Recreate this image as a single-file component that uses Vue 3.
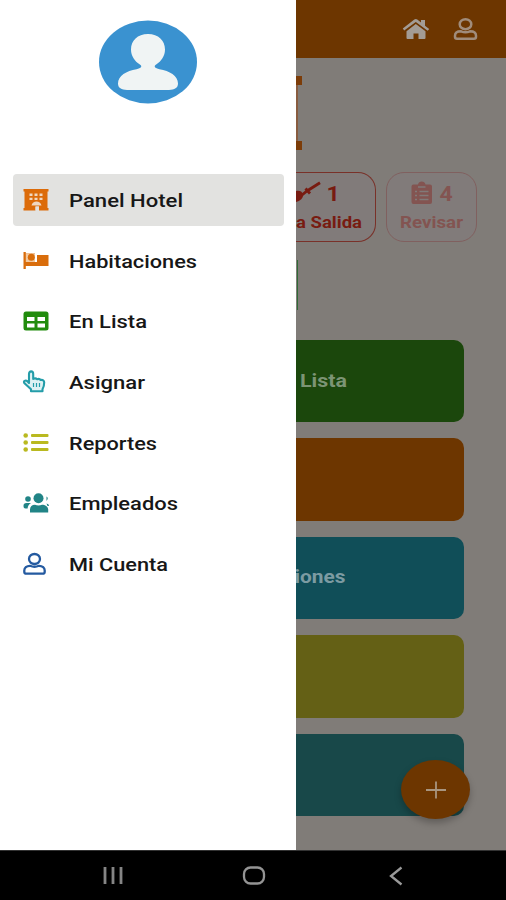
<script setup>
const menu = [
  { id: 'hotel', label: 'Panel Hotel', color: '#dc6b09', width: 114 },
  { id: 'bed', label: 'Habitaciones', color: '#d96d0c', width: 128 },
  { id: 'table', label: 'En Lista', color: '#218c0d', width: 78 },
  { id: 'hand', label: 'Asignar', color: '#249da9', width: 76 },
  { id: 'list', label: 'Reportes', color: '#b9b920', width: 88 },
  { id: 'users', label: 'Empleados', color: '#218486', width: 109 },
  { id: 'user', label: 'Mi Cuenta', color: '#245aa0', width: 99 },
]
const tiles = [
  { color: '#1b470c', label: 'Lista', tint: '#7c9474' },
  { color: '#6d3600' },
  { color: '#104e58', label: 'iones', tint: '#7c9ba2' },
  { color: '#646015' },
  { color: '#184849' },
]
</script>

<template>
  <div class="phone">
    <div class="screen">
      <aside class="drawer">
        <svg class="avatar" viewBox="0 0 98 84">
          <ellipse cx="49" cy="42" rx="49" ry="41.500" fill="#3a92d0" />
          <path d="M49 14c-10.500 0-17 6.500-17 15.500 0 6.500 4 12 8.500 14.800 3.500 2.200 1.500 4-3 4.900C27.500 51 19 55.500 19 63.500c0 4.500 3.500 6.300 9 6.500h42c5.500-.2 9-2 9-6.500 0-8-8.500-12.500-18.500-14.300-4.500-.9-6.500-2.700-3-4.900C62 41.500 66 36 66 29.500 66 20.500 59.500 14 49 14z" fill="#f0f4f4" />
        </svg>
        <nav class="menu">
          <a v-for="(m, i) in menu" :key="m.id" class="item" :class="{ active: i === 0 }">
            <svg class="icon" viewBox="0 0 26 24" :style="{ color: m.color }">
              <g v-if="m.id === 'hotel'">
                <path d="M.5 1h25v2.500h-1V20h1v2.500H16v-4h-3.500v4H.5V20h1V3.500h-1z" fill="currentColor" />
                <path d="M6.500 5.500h3V8h-3zM11.500 5.500h3V8h-3zM16.500 5.500h3V8h-3zM6.500 9.800h3v2.200h-3zM11.500 9.800h3v2.200h-3zM16.500 9.800h3v2.200h-3zM8.500 17.500c1-5.500 9-5.500 10 0z" fill="#f0d7c0" />
                <path d="M12.500 18.500h3.500v4h-3.500z" fill="#e2e2e0" />
              </g>
              <g v-else-if="m.id === 'bed'" fill="currentColor">
                <path d="M.5 3h2.300v1.500H12V13h2V6h11.500v11H2.800v3H.5z" />
                <path d="M2.800 4.500H12V13H2.800z" fill="#f2c9a0" />
                <circle cx="8.300" cy="8.200" r="3.500" />
              </g>
              <g v-else-if="m.id === 'table'">
                <rect x=".5" y="2.500" width="25" height="19" rx="2.500" fill="currentColor" />
                <path d="M4 8h7.500v4H4zM14.500 8H22v4h-7.500zM4 14.500h7.500v4H4zM14.500 14.500H22v4h-7.500z" fill="#fff" />
              </g>
              <g v-else-if="m.id === 'hand'" fill="none" stroke="currentColor" stroke-width="2.100" stroke-linejoin="round">
                <path d="M6 13V4c0-3.500 4.200-3.500 4.200 0v5c1.500-1 3-.7 4 .3 1.300-.7 2.700-.3 3.500.7 2-.5 3.500.5 3.500 2.300 0 3.500-.5 5-1.700 7v2H8v-2l-6.500-6c-1.500-2 1-3.700 2.700-2.200z" fill="#dff2f3" />
                <path d="M10.500 13v4M13.500 13v4M16.500 13v4" stroke-width="1.200" />
              </g>
              <g v-else-if="m.id === 'list'" fill="currentColor">
                <circle cx="2.700" cy="4.500" r="2.300" /><circle cx="2.700" cy="11.500" r="2.300" /><circle cx="2.700" cy="18.500" r="2.300" />
                <rect x="8" y="3.100" width="17.500" height="2.800" rx="1" /><rect x="8" y="10.100" width="17.500" height="2.800" rx="1" /><rect x="8" y="17.100" width="17.500" height="2.800" rx="1" />
              </g>
              <g v-else-if="m.id === 'users'" fill="currentColor">
                <circle cx="15.500" cy="7.200" r="5" />
                <path d="M7 21.500v-3c0-3 2-4.800 5-4.800 2 1 5 1 7 0 3 0 6.200 1.800 6.200 4.800v3z" />
                <circle cx="5" cy="8" r="2.800" />
                <path d="M.5 14.800c0-1.800 1-2.800 3-2.800h4.500c-2 1.200-3.200 3-3.400 5.500H2.500c-1.500 0-2-.8-2-2.700z" />
                <path d="M23.500 5.500q2.500 1.500 0 4.500zM23.500 12.500q2.500.2 2.500 2.500h-1.500z" />
              </g>
              <g v-else fill="none" stroke="currentColor" stroke-width="2.300">
                <ellipse cx="11.500" cy="7" rx="5.500" ry="5" />
                <path d="M7 13.800c-3.500 0-5.700 2-5.700 4.700v1.200q0 2 2 2h16.400q2 0 2-2v-1.200c0-2.700-2.200-4.700-5.700-4.700-3 1.300-6 1.300-9 0z" />
              </g>
            </svg>
            <svg class="label" :width="m.width + 4" height="28">
              <text x="0" y="21" :textLength="m.width" lengthAdjust="spacingAndGlyphs">{{ m.label }}</text>
            </svg>
          </a>
        </nav>
      </aside>

      <main class="page">
        <header class="topbar">
          <svg width="28" height="24" viewBox="0 0 28 24" fill="#a39c95">
            <path d="M.8 11.500 12.300 2.500q1.500-1.200 3 0l3.700 3V3h4v5.800l4.200 3.200-1.500 1.800L13.800 5 2.200 13.600z" />
            <path d="M13.800 7 23.500 14.300v6.700q0 1-1 1H16.500v-5.500h-5V22H5.500q-1 0-1-1v-6.700z" />
          </svg>
          <svg width="24" height="24" viewBox="0 0 24 24" fill="none" stroke="#a08c7b" stroke-width="2.500">
            <ellipse cx="11.500" cy="7.200" rx="5.800" ry="5" />
            <path d="M7 14.300c-4 0-6 1.800-6 4.500v1q0 2 2 2h17q2 0 2-2v-1c0-2.700-2-4.500-6-4.500-3 1.300-6 1.300-9 0z" />
          </svg>
        </header>
        <div class="logo"></div>
        <div class="chips">
          <div class="chip leaving">
            <div class="count">
              <svg width="24" height="22" viewBox="0 0 24 22">
                <path d="M0 9c3-1 6 0 7 3 .8 4-3 7-7 8z" fill="currentColor" />
                <path d="m6 13 5-4L24 .8M9.500 6.500l4.500 5" fill="none" stroke="currentColor" stroke-width="2.800" />
              </svg>
              <span class="number">1</span>
            </div>
            <svg class="caption" width="70" height="22"><text x="0" y="17" textLength="66" lengthAdjust="spacingAndGlyphs">a Salida</text></svg>
          </div>
          <div class="chip review">
            <div class="count">
              <svg width="22" height="24" viewBox="0 0 22 24">
                <path d="M2.500 3.500H7C7.500-.5 14-.5 14.500 3.500h4.500q2 0 2 2V21q0 2-2 2H2.500q-2 0-2-2V5.500q0-2 2-2z" fill="currentColor" />
                <path d="M7 6h7.500M4 10.500h2M8.500 10.500h9M4 14.500h2M8.500 14.500h9M4 18.500h2M8.500 18.500h9" stroke="#817a79" stroke-width="1.500" />
              </svg>
              <span class="number">4</span>
            </div>
            <svg class="caption" width="64" height="22"><text x="0" y="17" textLength="63" lengthAdjust="spacingAndGlyphs">Revisar</text></svg>
          </div>
        </div>
        <div class="outline"></div>
        <div class="tiles">
          <div v-for="(t, i) in tiles" :key="i" class="tile" :style="{ background: t.color }">
            <svg v-if="t.label" class="tile-label" width="53" height="28">
              <text :x="i === 0 ? 51 : 49.500" y="20.500" text-anchor="end" :textLength="i === 0 ? 47 : 51" lengthAdjust="spacingAndGlyphs" :fill="t.tint">{{ t.label }}</text>
            </svg>
          </div>
        </div>
        <button class="fab" aria-label="+">
          <svg width="22" height="18" viewBox="0 0 22 18"><path d="M11 .5v17M1 9h20" stroke="#a8957f" stroke-width="1.800" /></svg>
        </button>
      </main>
    </div>
    <footer class="system">
      <svg width="22" height="20" viewBox="0 0 22 20"><path d="M3 1v17M11 1v17M19 1v17" stroke="#858585" stroke-width="2.800" /></svg>
      <svg width="24" height="20" viewBox="0 0 24 20"><rect x="2" y="1.500" width="20" height="16" rx="6.500" fill="none" stroke="#949494" stroke-width="2.300" /></svg>
      <svg width="14" height="20" viewBox="0 0 14 20"><path d="M12.500 1.500 2 10 12.500 18.500" fill="none" stroke="#999" stroke-width="2.300" /></svg>
    </footer>
  </div>
</template>

<style>
body { margin: 0; background: #000; }
</style>
<style scoped>
.phone { width: 506px; height: 900px; overflow: hidden; font-family: Roboto, sans-serif; background: #000; }
.screen { display: grid; grid-template-columns: 296px 210px; height: 850px; }
svg { display: block; flex: none; overflow: visible; }
.drawer { background: #fff; }
.avatar { width: 98px; height: 84px; margin: 20px 0 0 99px; }
.menu { display: flex; flex-direction: column; gap: 8.700px; padding: 70px 12px 0 13px; }
.item { display: flex; align-items: center; gap: 20.500px; height: 52px; padding-left: 9.500px; border-radius: 4px; }
.item.active { background: #e2e2e0; }
.icon { width: 26px; height: 24px; }
.label text { font-size: 18.500px; font-weight: 500; fill: #171717; }
.page { position: relative; display: flex; flex-direction: column; background: #807c78; overflow: hidden; }
.topbar { display: flex; justify-content: flex-end; align-items: center; gap: 24px; height: 58px; box-sizing: border-box; padding-right: 28px; background: #6d3600; }
.logo { width: 6px; height: 56px; margin-top: 18px; border-top: 9px solid #7c3c08; border-bottom: 9px solid #7c3c08; background: linear-gradient(90deg, #895c40 2px, #807c78 2px); }
.chips { display: flex; gap: 10px; margin-top: 22px; }
.chip { box-sizing: border-box; height: 70px; border: 1.500px solid; display: flex; flex-direction: column; align-items: center; background: #817b7a; }
.leaving { width: 80px; border-left: 0; border-radius: 0 18px 18px 0; color: #781b11; align-items: flex-start; border-color: #793129; }
.review { width: 91px; border-radius: 18px; color: #835451; border-color: #80605f; }
.count { display: flex; align-items: center; gap: 7px; height: 24px; margin-top: 8px; }
.number { font-size: 21px; font-weight: 700; line-height: 24px; transform: translateY(1px) scaleX(1.100); }
.caption { margin-top: 6px; }
.caption text { font-size: 16.500px; font-weight: 700; fill: currentColor; }
.outline { width: 1px; height: 50px; margin-top: 18px; border-right: 1.500px solid #306b36; }
.tiles { display: flex; flex-direction: column; gap: 16px; margin-top: 30px; }
.tile { display: flex; align-items: center; width: 168px; height: 82.400px; border-radius: 0 10px 10px 0; }
.tile-label { margin-top: -3px; }
.tile-label text { font-size: 18.500px; font-weight: 700; }
.fab { position: absolute; right: 36px; bottom: 31px; width: 69px; height: 59px; border: 0; padding: 0; border-radius: 50%; background: #6d3600; display: flex; align-items: center; justify-content: center; box-shadow: 0 4px 7px rgba(0, 0, 0, .25); }
.system { display: flex; align-items: center; height: 50px; padding-left: 102px; background: #000; border-top: 1px solid #333; box-sizing: border-box; gap: 118px; }
.system svg:last-child { margin-left: 5px; }
</style>
